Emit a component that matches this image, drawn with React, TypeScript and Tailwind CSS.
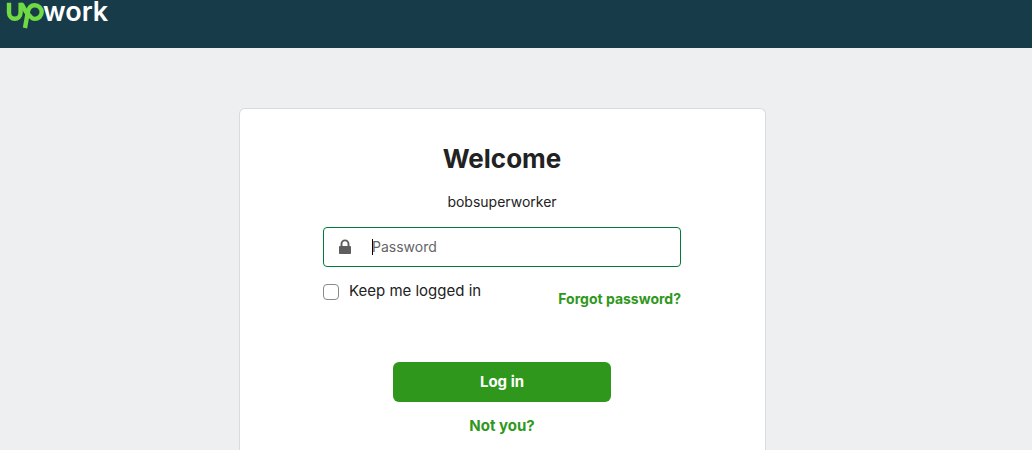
export default function App() {
  return (
    <div className="flex min-h-screen flex-col bg-[#edeff1] font-['Inter','Liberation_Sans',sans-serif] text-[#222]">
      <header className="h-12 bg-[#183b4a]">
        <a href="#" aria-label="Upwork home" className="block w-[112px]">
          <svg viewBox="0 0 112 32" className="h-8 w-[112px]">
            <g fill="none" stroke="#6fda44" strokeWidth="4.4" strokeLinejoin="round">
              <path d="M9 2.8V12.6A5.8 6.2 0 0 0 20.6 12.6V2.8" />
              <path d="M20.6 5H22.2C24 9 26.5 13 29.8 16" />
              <path d="M25 28L27.7 12.6C28.6 7.8 31 5.3 34.8 5.3A6.9 6.8 0 0 1 34.8 18.9C32.8 18.9 31 17.5 29.5 15.5" />
            </g>
            <text x="43" y="21" fill="#fff" className="font-['Inter',sans-serif] text-[27px] font-semibold">work</text>
          </svg>
        </a>
      </header>
      <main className="flex flex-1 justify-center pt-[60px] pr-[27px]">
        <section className="w-full max-w-[527px] rounded-t-md border border-b-0 border-[#d9dbde] bg-white pt-8 pr-[84px] pl-[83px]">
          <h1 className="text-center text-[26px] leading-9 font-bold">Welcome</h1>
          <p className="mt-[15px] text-center text-sm leading-5">bobsuperworker</p>
          <form className="flex flex-col" onSubmit={(e) => e.preventDefault()}>
            <div className="relative mt-[15px]">
              <svg viewBox="0 0 14 16" className="absolute top-3 left-[15px] h-4 w-[14px]" aria-hidden="true">
                <path d="M3.5 8V4.9a3.5 3.5 0 0 1 7 0V8" fill="none" stroke="#5e5e5e" strokeWidth="1.9" />
                <rect x="1" y="7" width="12" height="8" rx="0.8" fill="#5e5e5e" />
              </svg>
              <input
                type="password"
                aria-label="Password"
                placeholder="Password"
                className="block h-10 w-full rounded border border-[#037a3a] bg-white pr-4 pb-[2px] pl-12 text-sm caret-transparent outline-none placeholder:text-[#656565]"
              />
              <span className="absolute top-3 left-[49px] h-4 w-px bg-black" aria-hidden="true" />
            </div>
            <div className="flex items-start justify-between">
              <label className="mt-[14px] flex items-center gap-[10px] text-[15px] leading-5">
                <input type="checkbox" className="mt-px size-4 appearance-none rounded-[4px] border border-[#8a8a8a] bg-white" />
                Keep me logged in
              </label>
              <a href="#" className="mt-[22px] text-sm leading-5 font-bold text-[#2f981c]">Forgot password?</a>
            </div>
            <button type="submit" className="mt-[53px] h-10 w-[218px] self-center rounded-md bg-[#2f981c] text-[15px] font-bold text-white">
              Log in
            </button>
            <a href="#" className="mt-[14px] self-center text-[15px] leading-5 font-bold text-[#2f981c]">Not you?</a>
          </form>
        </section>
      </main>
    </div>
  );
}
